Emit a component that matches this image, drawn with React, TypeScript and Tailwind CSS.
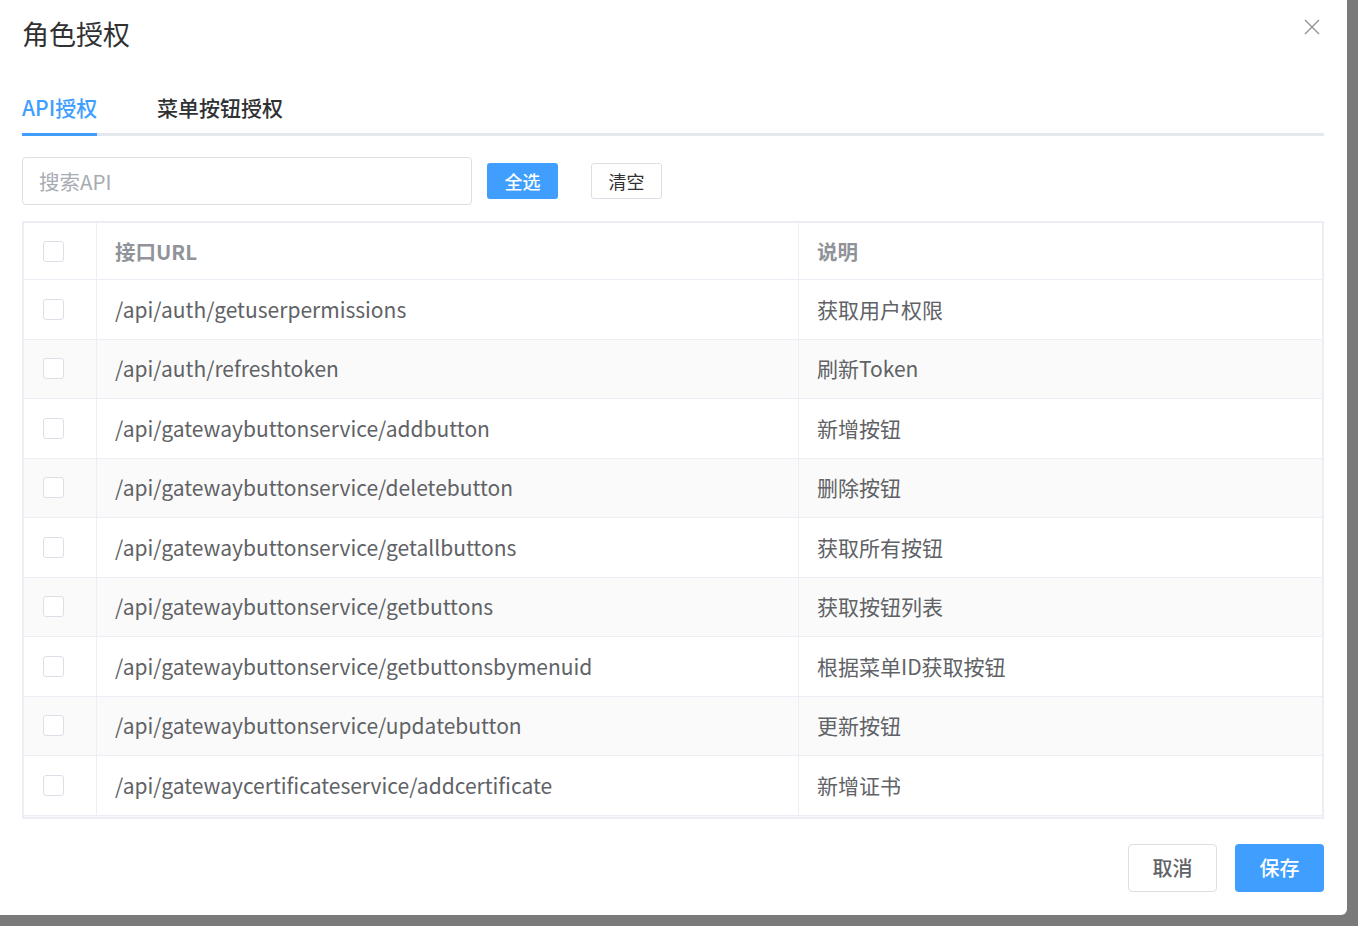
import React from "react";

const rows: [string, string][] = [
  ["/api/auth/getuserpermissions", "获取用户权限"],
  ["/api/auth/refreshtoken", "刷新Token"],
  ["/api/gatewaybuttonservice/addbutton", "新增按钮"],
  ["/api/gatewaybuttonservice/deletebutton", "删除按钮"],
  ["/api/gatewaybuttonservice/getallbuttons", "获取所有按钮"],
  ["/api/gatewaybuttonservice/getbuttons", "获取按钮列表"],
  ["/api/gatewaybuttonservice/getbuttonsbymenuid", "根据菜单ID获取按钮"],
  ["/api/gatewaybuttonservice/updatebutton", "更新按钮"],
  ["/api/gatewaycertificateservice/addcertificate", "新增证书"],
  ["", ""],
];

const Box = () => <div className="w-[21px] h-[21px] border border-[#dcdfe6] rounded-[3px] bg-white" />;

export default function App() {
  return (
    <div className="w-[1358px] h-[926px] bg-[#7a7a7a] overflow-hidden" style={{ fontFamily: '"Noto Sans CJK SC", "Noto Sans", sans-serif' }}>
      <div className="w-[1347px] h-[915px] bg-white rounded-br-[6px] relative flex flex-col">
        <div className="h-[70px] px-[22px] flex items-center text-[27px] text-[#303133] pb-[2px]">角色授权</div>
        <svg className="absolute right-[27px] top-[19px]" width="16" height="16" viewBox="0 0 16 16" stroke="#909399" strokeWidth="1.4"><path d="M1 1L15 15M15 1L1 15" /></svg>
        <div className="mx-[22px] w-[1302px] h-[66px] flex items-end border-b-[3px] border-[#e4e7ed] relative">
          <div className="w-[75px] text-[21px] text-[#409eff] font-medium pb-[10px] relative whitespace-nowrap">API授权<div className="absolute left-0 right-0 -bottom-[3px] h-[3px] bg-[#409eff]" /></div>
          <div className="ml-[60px] text-[21px] text-[#303133] font-medium pb-[10px]">菜单按钮授权</div>
        </div>
        <div className="mx-[22px] mt-[21px] flex items-center">
          <div className="w-[450px] h-[48px] border border-[#dcdfe6] rounded-[4px] flex items-center px-[16px] text-[20.5px] text-[#a8abb2]">搜索API</div>
          <div className="ml-[15px] w-[71px] h-[36px] bg-[#409eff] rounded-[3px] text-white text-[18px] font-medium flex items-center justify-center">全选</div>
          <div className="ml-[33px] w-[71px] h-[36px] border border-[#dcdfe6] rounded-[3px] text-[#303133] text-[18px] flex items-center justify-center">清空</div>
        </div>
        <div className="mx-[22px] mt-[16px] w-[1302px] h-[598px] border-2 border-[#ebeef5] overflow-hidden">
          <div className="flex h-[57px] border-b border-[#ebeef5] text-[20.5px] font-bold text-[#909399]">
            <div className="w-[73px] flex items-center pl-[19px] border-r border-[#ebeef5]"><Box /></div>
            <div className="w-[702px] flex items-center pl-[18px] border-r border-[#ebeef5]">接口URL</div>
            <div className="flex-1 flex items-center pl-[18px]">说明</div>
          </div>
          {rows.map(([u, d], i) => (
            <div key={i} className={`flex h-[59.5px] border-b border-[#ebeef5] text-[21px] text-[#606266] ${i % 2 ? "bg-[#fafafa]" : "bg-white"}`}>
              <div className="w-[73px] flex items-center pl-[19px] border-r border-[#ebeef5]"><Box /></div>
              <div className="w-[702px] flex items-center pl-[18px] border-r border-[#ebeef5]">{u}</div>
              <div className="flex-1 flex items-center pl-[18px]">{d}</div>
            </div>
          ))}
        </div>
        <div className="mx-[22px] mt-[25px] w-[1302px] flex justify-end gap-[18px]">
          <div className="w-[89px] h-[48px] border border-[#dcdfe6] rounded-[4px] text-[20px] font-medium text-[#606266] flex items-center justify-center">取消</div>
          <div className="w-[89px] h-[48px] bg-[#409eff] rounded-[4px] text-[20px] font-medium text-white flex items-center justify-center">保存</div>
        </div>
      </div>
    </div>
  );
}
